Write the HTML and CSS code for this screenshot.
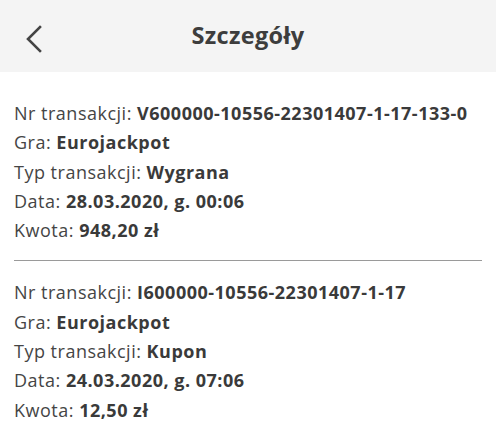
FILE: index.html
```html
<!DOCTYPE html>
<html lang="pl">
<head>
  <meta charset="UTF-8" />
  <meta name="viewport" content="width=device-width, initial-scale=1.0"/>
  <title>Szczegóły</title>
  <link rel="stylesheet" href="styles.css">
</head>
<body>
  <div class="header">
    <button class="back" aria-label="Wstecz">
      <svg width="18" height="28" viewBox="0 0 18 28">
        <path d="M15 2 L3 14 L15 26" fill="none" stroke="#444" stroke-width="2.6" stroke-linecap="square"/>
      </svg>
    </button>
    <h1>Szczegóły</h1>
  </div>

  <div class="content">
    <div class="item">
      <p>Nr transakcji: <b>V600000-10556-22301407-1-17-133-0</b></p>
      <p>Gra: <b>Eurojackpot</b></p>
      <p>Typ transakcji: <b>Wygrana</b></p>
      <p>Data: <b>28.03.2020, g. 00:06</b></p>
      <p>Kwota: <b>948,20 zł</b></p>
    </div>
    <div class="item">
      <p>Nr transakcji: <b>I600000-10556-22301407-1-17</b></p>
      <p>Gra: <b>Eurojackpot</b></p>
      <p>Typ transakcji: <b>Kupon</b></p>
      <p>Data: <b>24.03.2020, g. 07:06</b></p>
      <p>Kwota: <b>12,50 zł</b></p>
    </div>
  </div>
</body>
</html>
```

FILE: styles.css
```css
body {
  margin: 0;
  font-family: "Open Sans", "Noto Sans", sans-serif;
  color: #3a3a3a;
  background: #fff;
}

.header {
  position: relative;
  height: 72px;
  background: #f4f4f4;
  display: flex;
  align-items: center;
  justify-content: center;
}

.back {
  position: absolute;
  left: 25px;
  top: 25px;
  padding: 0;
  border: 0;
  background: none;
  line-height: 0;
}

h1 {
  margin: 0 0 2px;
  font-size: 23.5px;
  letter-spacing: 0.3px;
  font-weight: 700;
  color: #3d3d3d;
}

.content {
  padding: 0 14px;
}

.item {
  padding: 27px 0 15px;
}

.item + .item {
  border-top: 1px solid #9a9a9a;
  padding-top: 17px;
}

.item p {
  margin: 0;
  font-size: 18px;
  letter-spacing: 0.5px;
  line-height: 29.3px;
  color: #454545;
}

.item b {
  color: #3a3a3a;
}
```
